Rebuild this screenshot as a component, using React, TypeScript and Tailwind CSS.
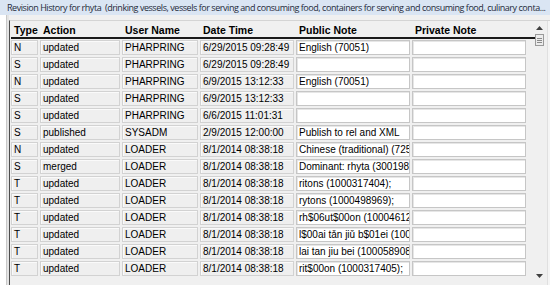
const rows: [string, string, string, string, string][] = [
  ["N", "updated", "PHARPRING", "6/29/2015 09:28:49", "English (70051)"],
  ["S", "updated", "PHARPRING", "6/29/2015 09:28:49", ""],
  ["N", "updated", "PHARPRING", "6/9/2015 13:12:33", "English (70051)"],
  ["S", "updated", "PHARPRING", "6/9/2015 13:12:33", ""],
  ["S", "updated", "PHARPRING", "6/6/2015 11:01:31", ""],
  ["S", "published", "SYSADM", "2/9/2015 12:00:00", "Publish to rel and XML"],
  ["N", "updated", "LOADER", "8/1/2014 08:38:18", "Chinese (traditional) (72553)"],
  ["S", "merged", "LOADER", "8/1/2014 08:38:18", "Dominant: rhyta (300198453)"],
  ["T", "updated", "LOADER", "8/1/2014 08:38:18", "ritons (1000317404);"],
  ["T", "updated", "LOADER", "8/1/2014 08:38:18", "rytons (1000498969);"],
  ["T", "updated", "LOADER", "8/1/2014 08:38:18", "rh$06ut$00on (1000461234);"],
  ["T", "updated", "LOADER", "8/1/2014 08:38:18", "l$00ai tǎn jiǔ b$01ei (1000589085);"],
  ["T", "updated", "LOADER", "8/1/2014 08:38:18", "lai tan jiu bei (1000589085);"],
  ["T", "updated", "LOADER", "8/1/2014 08:38:18", "rit$00on (1000317405);"],
];

const widths = ["w-[27px]", "w-[80px]", "w-[76px]", "w-[94px]", "w-[114px]", "w-[114px]"];
const headers = ["Type", "Action", "User Name", "Date Time", "Public Note", "Private Note"];

function Cell({ w, text, white }: { w: string; text: string; white?: boolean }) {
  return (
    <div
      className={`${w} h-[15px] shrink-0 overflow-hidden whitespace-nowrap border pl-[2px] leading-[13px] ${
        white
          ? "bg-white border-[#c6c6c6] shadow-[inset_1px_1px_0_#e6e6e6]"
          : "bg-[#efefef] border-[#d2d2d2] shadow-[inset_1px_1px_0_#fafafa]"
      }`}
    >
      {text}
    </div>
  );
}

export default function App() {
  return (
    <div className="w-[550px] h-[285px] bg-[#f0f0f0] flex flex-col overflow-hidden font-['Liberation_Sans',Arial,sans-serif] text-[10px] text-black">
      {/* title bar */}
      <div className="h-[15px] shrink-0 bg-[#dae5f3] pl-[7px] font-['Open_Sans',sans-serif] text-[9px] tracking-[-0.45px] leading-[15px] text-[#1f2a3a] whitespace-nowrap overflow-hidden">
        Revision History for rhyta&nbsp; (drinking vessels, vessels for serving and consuming food, containers for serving and consuming food, culinary conta...
      </div>

      <div className="flex flex-1">
        {/* window behind */}
        <div className="w-[7px] bg-white border-r border-[#c8c8c8]" />
        <div className="w-[2px] bg-[#e4e4e4]" />

        {/* panel */}
        <div className="flex flex-1 mt-[5px] border-l border-[#4d4d4d] border-t border-t-[#d4d4d4]">
          <div className="w-[519px] shrink-0 pl-[1px]">
            {/* header */}
            <div className="flex gap-[2px] h-[16px] items-end pb-[1px] font-bold text-[10.5px]">
              {headers.map((h, i) => (
                <div key={h} className={`${widths[i]} shrink-0 pl-[3px] leading-[12px]`}>
                  {h}
                </div>
              ))}
            </div>
            <div className="h-[2px] bg-[#1a1a1a] w-[524px]" />
            <div className="flex flex-col gap-[2px] pt-[1px]">
              {rows.map((r, i) => (
                <div key={i} className="flex gap-[2px]">
                  <Cell w={widths[0]} text={r[0]} />
                  <Cell w={widths[1]} text={r[1]} />
                  <Cell w={widths[2]} text={r[2]} />
                  <Cell w={widths[3]} text={r[3]} />
                  <Cell w={widths[4]} text={r[4]} white />
                  <Cell w={widths[5]} text="" white />
                </div>
              ))}
            </div>
          </div>

          {/* scrollbar */}
          <div className="flex-1 flex flex-col items-center pt-[4px] pb-[7px] pl-[3px]">
            <svg width="7" height="4" viewBox="0 0 7 4" className="mt-[1px]">
              <path d="M3.5 0 L7 4 L0 4 Z" fill="#404040" />
            </svg>
            <div className="mt-[4px] w-[9px] h-[12px] border border-[#9a9a9a] bg-[#ececec] flex flex-col items-center justify-center gap-[1px]">
              <div className="w-[5px] h-px bg-[#8a8a8a]" />
              <div className="w-[5px] h-px bg-[#8a8a8a]" />
              <div className="w-[5px] h-px bg-[#8a8a8a]" />
            </div>
            <div className="flex-1" />
            <svg width="7" height="4" viewBox="0 0 7 4">
              <path d="M0 0 L7 0 L3.5 4 Z" fill="#404040" />
            </svg>
          </div>
          <div className="w-[3px] border-l border-[#e0e0e0] bg-[#f5f5f5]" />
        </div>
      </div>
    </div>
  );
}
